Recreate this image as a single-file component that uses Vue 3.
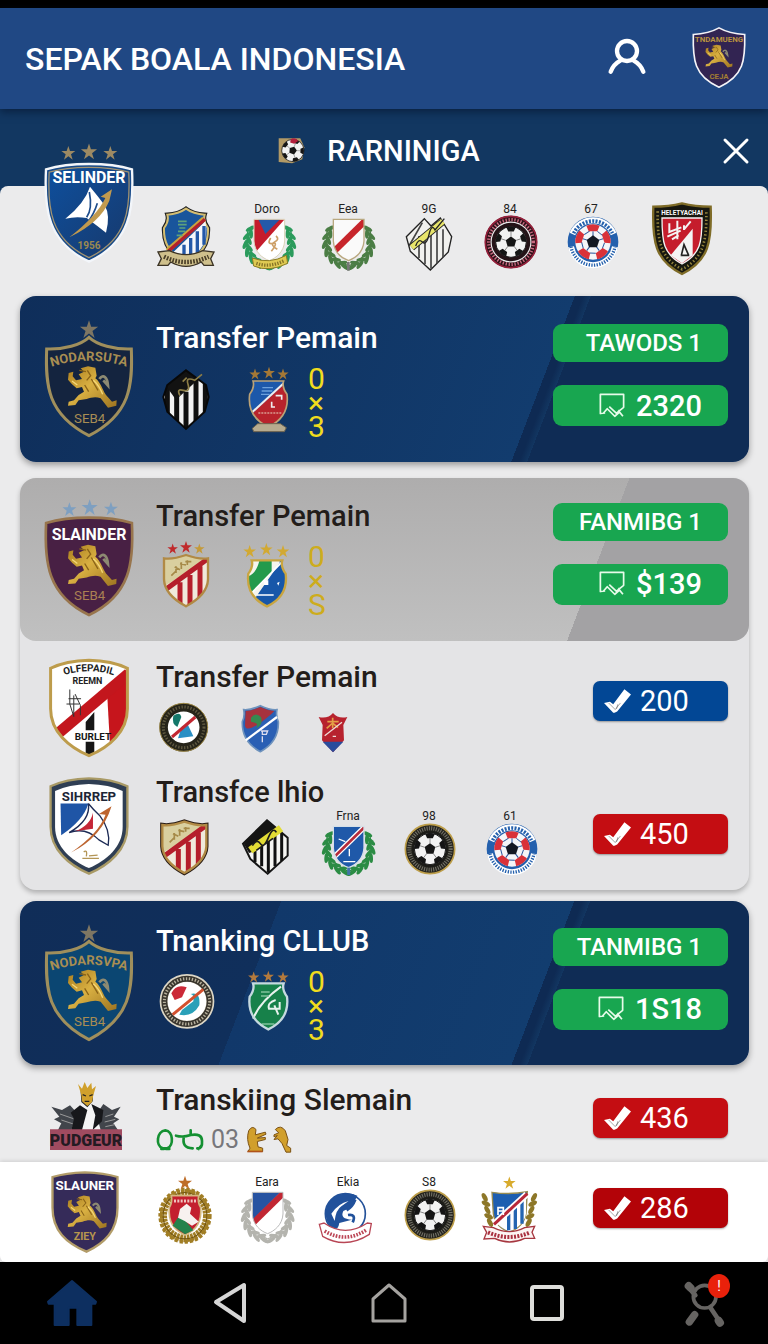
<template>
  <div class="app">
    <!-- shared shapes for all club crests -->
    <svg class="defs" width="0" height="0" aria-hidden="true">
      <defs>
        <linearGradient id="gold" x1="0" y1="0" x2="1" y2="1">
          <stop offset="0" stop-color="#a97c1d" />
          <stop offset="0.45" stop-color="#d9b042" />
          <stop offset="1" stop-color="#9d7420" />
        </linearGradient>
        <linearGradient id="sail" x1="0" y1="0" x2="1" y2="1">
          <stop offset="0" stop-color="#0e4f9d" />
          <stop offset="1" stop-color="#17396c" />
        </linearGradient>
        <path id="star" d="M0-22 5-7 21-7 8 3 13 19 0 9-13 19-8 3-21-7-5-7Z" />
        <path id="shieldA" d="M135 55C110 78 60 92 8 90C4 200 10 285 135 350C260 285 266 200 262 90C210 92 160 78 135 55Z" />
        <path id="shieldB" d="M135 56Q60 56 6 72C0 190 10 290 135 349C260 290 270 190 264 72Q210 56 135 56Z" />
        <path id="shieldC" d="M120 4Q50 6 4 28V150C4 220 60 266 120 292C180 266 236 220 236 150V28Q190 6 120 4Z" />
        <path id="badge" d="M90 36Q50 50 24 46V110C26 150 60 174 90 190C120 174 154 150 156 110V46Q130 50 90 36Z" />
        <clipPath id="badgeClip"><use href="#badge" /></clipPath>
        <path id="cup" d="M44 52H136Q130 70 146 92C152 140 132 170 90 190C48 170 28 140 34 92Q50 70 44 52Z" />
        <clipPath id="cupClip"><use href="#cup" /></clipPath>
        <path id="flat" d="M46 40H138V105C136 138 112 156 92 164C70 156 48 138 46 105Z" />
        <clipPath id="flatClip"><use href="#flat" /></clipPath>
        <clipPath id="shieldCClip"><use href="#shieldC" /></clipPath>
        <path id="gem" d="M90 16L150 60 158 96 146 140 90 192 34 140 22 96 34 60Z" />
        <clipPath id="gemClip"><use href="#gem" /></clipPath>

        <g id="lion">
          <path fill="none" stroke="#8d8a72" stroke-width="8" d="M96 40C108 24 120 34 122 60L108 44" />
          <path fill="url(#gold)" d="M40 8L62 2 84 6 88 30 84 38C100 50 104 70 116 88L134 108 148 104 147 120 122 126 100 98C84 92 72 96 58 100L34 104 24 118 2 120 4 108 20 104 34 88 50 78 44 64 28 68 14 56 2 42 4 22 18 18 16 32 26 44 44 40 34 26 50 18Z" />
          <path fill="none" stroke="#8a6318" stroke-width="4" d="M60 14L70 30 58 44M72 40L92 74M52 58L64 78M36 14L56 18" />
          <path fill="none" stroke="#f5d878" stroke-width="4" d="M78 44Q96 60 106 86M14 46L30 58" />
        </g>

        <g id="laurel">
          <path fill="none" stroke="currentColor" stroke-width="4" d="M-62-46Q-84 30 0 68Q84 30 62-46" />
          <ellipse v-for="(leaf, i) in leaves" :key="i" rx="15" ry="6" fill="currentColor"
            :transform="`translate(${leaf.x} ${leaf.y}) rotate(${leaf.r})`" />
        </g>

        <g id="ball">
          <circle r="50" fill="#f2f2f2" stroke="#111" stroke-width="3" />
          <path fill="#151515" d="M0-18 17-6 11 15-11 15-17-6Z" />
          <g v-for="n in 5" :key="n" :transform="`rotate(${n * 72})`">
            <path fill="#151515" d="M-15-47Q0-53 15-47L9-34H-9Z" />
            <path stroke="#555" stroke-width="2" d="M0-18V-34" />
          </g>
        </g>

        <!-- top strip -->
        <g id="c-royal">
          <path fill="#15407e" stroke="#222" stroke-width="13" d="M90 8Q68 24 34 26Q40 46 24 66C22 120 50 150 90 164C130 150 158 120 156 66Q140 46 146 26Q112 24 90 8Z" />
          <path fill="#19559c" stroke="#d3bd72" stroke-width="6" d="M90 8Q68 24 34 26Q40 46 24 66C22 120 50 150 90 164C130 150 158 120 156 66Q140 46 146 26Q112 24 90 8Z" />
          <path fill="#f5f7fa" d="M148 46L50 140 90 158C130 144 152 118 151 66Z" />
          <path stroke="#2358a8" stroke-width="10" d="M84 116V156M104 96V152M124 76V140M144 60V116" />
          <path stroke="#c9a33e" stroke-width="15" d="M34 134L144 38" />
          <path stroke="#b3202c" stroke-width="10" d="M37 136L147 40" />
          <path stroke="#5fa27c" stroke-width="5" d="M66 46H92M66 56H92M70 66H88M66 76H88M62 88H80" />
          <path fill="#cfc08c" stroke="#3b3325" stroke-width="4" d="M6 138L40 134Q90 158 140 134L174 138 164 158 172 178H144L136 168Q90 194 44 168L36 178H6L16 158Z" />
          <path fill="none" stroke="#4a3f28" stroke-width="13" stroke-dasharray="5 4" d="M24 152Q90 184 158 152" />
        </g>
        <g id="c-doro">
          <use href="#laurel" color="#2b9b5c" x="97" y="112" />
          <g transform="translate(5)">
            <use href="#flat" fill="#fff" />
            <g clip-path="url(#flatClip)">
              <path fill="#c51c2c" d="M46 40H138L46 144Z" />
              <path fill="#2459a9" d="M58 38H126L80 84Z" />
              <path stroke="#cda068" stroke-width="5" fill="none" d="M96 96Q84 116 102 112T98 136M112 90Q124 100 108 108T116 130" />
            </g>
            <use href="#flat" fill="none" stroke="#dad3b8" stroke-width="3" />
          </g>
          <path fill="#dfca52" stroke="#8b7c24" stroke-width="3" d="M46 156Q97 176 148 148L152 172Q97 200 50 180Z" />
          <path fill="none" stroke="#857326" stroke-width="10" stroke-dasharray="4 4" d="M58 172Q97 186 142 164" />
        </g>
        <g id="c-eea">
          <use href="#laurel" color="#4b7d45" x="92" y="112" />
          <use href="#flat" fill="#fafafa" />
          <g clip-path="url(#flatClip)"><path stroke="#c7252b" stroke-width="19" d="M44 140L146 40" /></g>
          <use href="#flat" fill="none" stroke="#b9a880" stroke-width="4" />
          <path stroke="#777" stroke-width="8" d="M91 168V194" />
        </g>
        <g id="c-gem-light">
          <path fill="#f1f1ee" stroke="#222" stroke-width="4" d="M76 38L96 60 124 36 158 92 148 138 94 192 34 136 22 92Z" />
          <path stroke="#444" stroke-width="5" d="M60 90V156M78 80V174M96 70V188M114 60V172M132 70V154M70 50L30 120" />
          <path stroke="#222" stroke-width="22" d="M38 124L130 48" />
          <path stroke="#e8e56b" stroke-width="17" d="M38 124L132 46" />
          <path fill="none" stroke="#222" stroke-width="4" d="M50 120Q58 96 70 108T90 86T108 72L136 38" />
        </g>
        <g id="c-ball-red">
          <circle cx="93" cy="108" r="70" fill="none" stroke="#2a1117" stroke-width="17" />
          <circle cx="93" cy="108" r="77" fill="none" stroke="#96203b" stroke-width="5" />
          <circle cx="93" cy="108" r="67" fill="none" stroke="#c96a80" stroke-width="10" stroke-dasharray="4 5" />
          <circle cx="93" cy="108" r="58" fill="#241317" />
          <use href="#ball" transform="translate(93 108) scale(.92)" />
        </g>
        <g id="c-ball-blue">
          <circle cx="96" cy="108" r="76" fill="#2460ad" />
          <path fill="none" stroke="#fff" stroke-width="18" d="M34 84A67 67 0 0 1 158 84" />
          <path fill="none" stroke="#2460ad" stroke-width="11" stroke-dasharray="6 4" d="M38 82A64 64 0 0 1 154 82" />
          <path fill="none" stroke="#fff" stroke-width="18" d="M30 122A67 67 0 0 0 162 122" />
          <path fill="none" stroke="#2460ad" stroke-width="10" stroke-dasharray="4 4" d="M30 122A67 67 0 0 0 162 122" />
          <circle cx="96" cy="108" r="53" fill="#f5f5f8" />
          <g v-for="n in 5" :key="n" :transform="`translate(96 108) rotate(${n * 72})`">
            <path fill="#d93139" d="M-20-49Q0-58 20-49L13-32H-13Z" />
            <path stroke="#29559b" stroke-width="3" d="M0-18V-32M13-32L28-20" />
          </g>
          <path fill="#131722" d="M96 88L115 102 108 124H84L77 102Z" />
        </g>
        <g id="c-black-red">
          <path fill="#17170f" stroke="#7f6c28" stroke-width="7" d="M90 4Q50 14 4 14C0 120 10 176 90 216C170 176 180 120 176 14Q130 14 90 4Z" />
          <path fill="none" stroke="#97873f" stroke-width="8" stroke-dasharray="4 7" d="M17 28C16 120 26 168 90 202C154 168 164 120 163 28" />
          <path fill="#c51d2c" stroke="#f3f3f3" stroke-width="4" d="M30 48H150C150 120 146 156 90 186C34 156 30 120 30 48Z" />
          <path fill="#f4f4f4" d="M122 80V160L90 184 56 160Z" />
          <path stroke="#f4f4f4" stroke-width="6" fill="none" d="M52 64V90L88 76M76 56V112M46 104L86 86M96 82L116 58M60 112L80 100M96 70V84" />
          <path stroke="#222" stroke-width="5" fill="none" d="M88 160L96 128 110 160M86 160H112" />
          <text class="crest-text" x="90" y="39" font-size="19" fill="#fff">HELETYACHAI</text>
        </g>

        <!-- transfer cards -->
        <g id="c-gem-dark">
          <use href="#gem" fill="#f3f3f3" />
          <g clip-path="url(#gemClip)">
            <path stroke="#101010" stroke-width="15" d="M34 50V160M62 40V180M90 80V190M120 30V180M148 40V150" />
            <path fill="#121212" d="M28 60L90 10 122 30 132 38 60 104Z" />
          </g>
          <use href="#gem" fill="none" stroke="#080808" stroke-width="6" />
          <path stroke="#8c7d46" stroke-width="5" fill="none" d="M72 92Q60 70 82 76T96 58T116 46L138 28M80 50L92 38" />
        </g>
        <g id="c-blue-red">
          <g fill="#a47836"><use href="#star" transform="translate(54 28) scale(.8)" /><use href="#star" transform="translate(96 24) scale(.85)" /><use href="#star" transform="translate(138 28) scale(.8)" /></g>
          <use href="#cup" fill="#1c58aa" transform="translate(4 -4)" />
          <g clip-path="url(#cupClip)" transform="translate(4 -4)">
            <path fill="#b8232c" d="M150 50V200H30V160Z" />
            <path stroke="#eee" stroke-width="6" d="M26 160L150 46" />
            <path stroke="#6ba0dc" stroke-width="4" d="M72 72H104M70 82H102M68 92H94" />
            <path stroke="#eee" stroke-width="5" fill="none" d="M112 96H130V108M100 114V130H110" />
            <path stroke="#d99a8f" stroke-width="4" stroke-dasharray="6 3" d="M60 148H132" />
          </g>
          <use href="#cup" fill="none" stroke="#baa277" stroke-width="5" transform="translate(4 -4)" />
          <path fill="#b7ab8f" stroke="#6c624e" stroke-width="3" d="M62 176L130 176 148 188 142 200 50 200 46 190Z" />
        </g>
        <g id="c-red-stripes">
          <use href="#badge" fill="#d9cf9f" />
          <g clip-path="url(#badgeClip)">
            <path fill="#f0e9dc" d="M160 50V190H40L24 130Z" />
            <path stroke="#b51e2b" stroke-width="15" d="M20 146L160 44M72 118V190M102 96V190M132 70V180" />
            <path stroke="#a68a48" stroke-width="5" fill="none" d="M46 98L60 84M60 70V90M56 72L72 80M76 58V78M72 62L90 66M94 52V66M88 56H106" />
          </g>
          <use href="#badge" fill="none" stroke="#b18a45" stroke-width="7" />
        </g>
        <g id="c-stars-red">
          <g fill="#c02a2c"><use href="#star" transform="translate(50 18) scale(.75)" /><use href="#star" transform="translate(90 13) scale(.85)" /></g>
          <use href="#star" transform="translate(130 18) scale(.75)" fill="#c49a3a" />
          <use href="#c-red-stripes" />
        </g>
        <g id="c-green-blue">
          <g fill="#d2a932"><use href="#star" transform="translate(38 26) scale(.9)" /><use href="#star" transform="translate(88 20) scale(.9)" /><use href="#star" transform="translate(138 26) scale(.9)" /></g>
          <use href="#cup" fill="#f5f5ee" />
          <g clip-path="url(#cupClip)">
            <path fill="#239a4c" d="M68 50H104V90L34 160V100Q58 92 68 50Z" />
            <path fill="#1757a9" d="M128 60V50H160V200H30Z" />
            <path stroke="#fff" stroke-width="5" d="M34 160L136 56" />
            <path fill="#fff" d="M80 112H94V126H80ZM60 154H110V158H60ZM120 120L128 116 124 128Z" />
          </g>
          <use href="#cup" fill="none" stroke="#c9a540" stroke-width="7" />
        </g>

        <g id="c-ring-black">
          <circle cx="83" cy="97" r="60" fill="#fff" stroke="#262419" stroke-width="25" />
          <circle cx="83" cy="97" r="72" fill="none" stroke="#9c8744" stroke-width="3" />
          <circle cx="83" cy="97" r="61" fill="none" stroke="#5f5940" stroke-width="9" stroke-dasharray="4 5" />
          <path fill="#14786a" d="M52 62Q72 48 76 66L64 96Q46 86 52 62Z" />
          <path fill="#2a8fc4" d="M78 94L96 90 112 124 66 130Z" />
          <path stroke="#c22731" stroke-width="9" d="M48 126L118 66" />
        </g>
        <g id="c-small-blue">
          <path fill="#2a5fb4" stroke="#6f93bd" stroke-width="5" d="M90 32Q60 46 40 44Q44 64 36 80C34 130 60 154 90 170C120 154 146 130 144 80Q136 64 140 44Q120 46 90 32Z" />
          <path fill="#a7323e" d="M90 36Q62 48 46 48L44 92Q50 120 124 56L132 48Q110 46 90 36Z" />
          <path fill="#378950" d="M62 68Q76 50 92 66Q100 90 76 100Q90 84 62 80Z" />
          <path stroke="#fff" stroke-width="7" d="M46 136L140 66" />
          <path stroke="#dde" stroke-width="4" fill="none" d="M92 108H112L108 118H96V108M96 124V142" />
        </g>
        <g id="c-tiny-red">
          <path fill="#b7222e" d="M45 54Q30 72 2 66L14 90 12 136 45 172 78 136 76 90 88 66Q60 72 45 54Z" />
          <path fill="#2a4c9c" d="M14 140H76L45 172Z" />
          <path stroke="#e3a046" stroke-width="5" fill="none" d="M28 80H62M44 68V100M26 100L44 84 60 98" />
          <path stroke="#eedcd8" stroke-width="4" d="M20 122L72 82M44 124H54" />
        </g>
        <g id="c-brown-stripes">
          <g transform="translate(-5 -10)">
            <use href="#badge" fill="none" stroke="#2a1d15" stroke-width="13" />
            <use href="#c-red-stripes" />
          </g>
        </g>
        <g id="c-gem-yellow">
          <path fill="#f5f5f2" stroke="#151515" stroke-width="6" d="M90 22L152 74V128L92 182 40 138 18 92Z" />
          <path stroke="#111" stroke-width="9" d="M54 88V148M74 80V160M94 70V178M114 60V160M134 60V144" />
          <path fill="#141414" d="M90 22L120 46 60 112 36 120 20 92Z" />
          <path stroke="#e2dc35" stroke-width="22" d="M40 112L132 46" />
          <path stroke="#1b1b1b" stroke-width="5" fill="none" d="M46 98Q60 76 70 92T94 74T118 58M58 112L108 76" />
        </g>
        <g id="c-laurel-blue">
          <use href="#laurel" color="#2b8c44" x="92" y="108" />
          <use href="#flat" fill="#1f59a9" />
          <g clip-path="url(#flatClip)">
            <path stroke="#fff" stroke-width="16" d="M40 140L148 34" />
            <path stroke="#b52b3a" stroke-width="8" d="M40 140L148 34" />
            <path stroke="#fff" stroke-width="4" d="M62 78L82 86M94 108V130M76 146H112" />
          </g>
          <use href="#flat" fill="none" stroke="#d5dfe7" stroke-width="4" />
          <path stroke="#4274a8" stroke-width="9" d="M92 164V186" />
        </g>
        <g id="c-ball-gold">
          <circle cx="93" cy="108" r="64" fill="#1c1c18" stroke="#25241e" stroke-width="20" />
          <circle cx="93" cy="108" r="74" fill="none" stroke="#bd9e4a" stroke-width="5" />
          <circle cx="93" cy="108" r="62" fill="none" stroke="#77766c" stroke-width="12" stroke-dasharray="3 4" />
          <use href="#ball" transform="translate(93 108) scale(.94)" />
        </g>

        <g id="c-ring-white">
          <circle cx="93" cy="100" r="70" fill="#fff" stroke="#ddd7c6" stroke-width="24" />
          <circle cx="93" cy="100" r="68" fill="none" stroke="#39352d" stroke-width="18" />
          <circle cx="93" cy="100" r="68" fill="none" stroke="#b9b39f" stroke-width="9" stroke-dasharray="4 5" />
          <path fill="#cb2938" d="M46 76Q60 46 92 58L78 88 56 96Z" />
          <path fill="#2aa0b8" d="M78 126L112 100Q116 80 104 78Q134 70 130 112Q110 148 70 140Z" />
          <path stroke="#d3502e" stroke-width="9" d="M50 140L142 64" />
        </g>
        <g id="c-green">
          <g fill="#b37a3d"><use href="#star" transform="translate(50 28) scale(.8)" /><use href="#star" transform="translate(94 26) scale(.8)" /><use href="#star" transform="translate(138 28) scale(.8)" /></g>
          <use href="#cup" fill="#17814a" transform="translate(4 -6)" />
          <path stroke="#e8f2ee" stroke-width="6" fill="none" d="M48 152Q70 100 132 56M116 96Q90 104 96 122H128V102M112 112L124 140" />
          <path stroke="#7fc19b" stroke-width="5" d="M72 72H98M72 84H96M74 168H112" />
          <use href="#cup" fill="none" stroke="#c5d9df" stroke-width="7" transform="translate(4 -6)" />
        </g>

        <!-- bottom row -->
        <g id="c-wreath-red">
          <g transform="translate(87 110) scale(1.08 1.14)">
            <circle r="60" fill="none" stroke="#a17e25" stroke-width="20" stroke-dasharray="8 2" />
            <circle r="61" fill="none" stroke="#6f5312" stroke-width="3" />
            <circle r="68" fill="none" stroke="#a17e25" stroke-width="12" stroke-dasharray="9 5" />
          </g>
          <ellipse cx="87" cy="108" rx="52" ry="58" fill="#fff" />
          <path fill="#c3202f" stroke="#d3b77f" stroke-width="5" d="M46 50H128Q124 70 134 86C138 130 116 156 87 168C58 156 36 130 40 86Q50 70 46 50Z" />
          <path fill="#25824b" d="M50 140L72 106 112 154 87 166Z" />
          <path fill="#f7f1ef" d="M72 90L92 74 106 86 102 104 128 128 108 140 86 126 66 116Z" />
          <path stroke="#f0c4c0" stroke-width="9" stroke-dasharray="6 4" d="M54 66H122" />
          <use href="#star" fill="#be6d29" transform="translate(87 12)" />
        </g>
        <g id="c-laurel-silver">
          <use href="#laurel" color="#b4b4ae" x="92" y="112" />
          <use href="#flat" fill="#fff" />
          <g clip-path="url(#flatClip)">
            <path fill="#2753a1" d="M46 40H130L46 124Z" />
            <path stroke="#c12733" stroke-width="18" d="M40 140L146 36" />
          </g>
          <use href="#flat" fill="none" stroke="#bbb" stroke-width="3" />
        </g>
        <g id="c-bird">
          <circle cx="82" cy="104" r="60" fill="#fff" stroke="#24529a" stroke-width="5" />
          <path fill="#21519b" d="M82 44C24 46 4 110 44 150Q60 156 64 132L102 122Q64 120 76 96Q100 90 118 50Q100 42 82 44Z" />
          <path fill="#fff" d="M40 104Q60 74 92 66L70 82Q54 92 50 126Z" />
          <path stroke="#21519b" stroke-width="8" fill="none" d="M86 94Q104 84 112 62M90 108Q116 104 104 130" />
          <path fill="#fff" stroke="#b84655" stroke-width="4" d="M4 136L18 132Q82 176 148 132L160 134 154 166Q82 212 14 172Z" />
          <path fill="none" stroke="#bc4656" stroke-width="11" stroke-dasharray="5 4" d="M20 156Q84 194 146 152" />
        </g>
        <g id="c-star-blue">
          <use href="#star" transform="translate(88 12) scale(.9)" fill="#d8ab2d" />
          <g fill="#8d7728">
            <ellipse v-for="n in 5" :key="'l' + n" rx="14" ry="7" :transform="`translate(${10 + n * 4} ${36 + n * 19}) rotate(${n % 2 ? 62 : 28})`" />
            <ellipse v-for="n in 5" :key="'r' + n" rx="14" ry="7" :transform="`translate(${166 - n * 4} ${36 + n * 19}) rotate(${n % 2 ? -62 : -28})`" />
          </g>
          <path fill="#1d5eb0" stroke="#998c51" stroke-width="4" d="M36 40Q90 48 142 38L138 104Q132 142 88 160Q44 142 40 104Z" />
          <path fill="#fff" d="M138 54V104Q132 140 88 157Q64 148 50 132Z" />
          <path stroke="#2465b1" stroke-width="10" d="M86 104V154M106 84V150M126 66V134" />
          <path stroke="#fff" stroke-width="20" d="M44 134L140 46" />
          <path stroke="#b72839" stroke-width="9" d="M42 136L142 44" />
          <path stroke="#fff" stroke-width="5" fill="none" d="M54 108V86H70V108M54 96H70" />
          <path fill="#fbf4f3" stroke="#a6363f" stroke-width="4" d="M10 142L40 146Q88 170 134 146L164 142 156 160 164 178 134 178Q88 200 44 178L12 180 20 160Z" />
          <path fill="none" stroke="#a93140" stroke-width="12" stroke-dasharray="6 4" d="M24 160Q88 188 150 160" />
        </g>

        <g id="i-check">
          <path fill="#fff" d="M62 0L82 16 40 68 32 72 28 72 0 42 18 38 28 46Z" />
          <path fill="none" stroke="#000" stroke-opacity=".35" stroke-width="3" d="M14 42L34 62 50 42M38 60L42 46" />
        </g>
      </defs>
    </svg>

    <header class="topbar">
      <h1>SEPAK BOALA INDONESIA</h1>
      <button class="icon-btn" aria-label="Profil">
        <svg width="38" height="36" viewBox="0 0 114 108" fill="none" stroke="#fff" stroke-width="13" stroke-linecap="round">
          <circle cx="57" cy="36" r="30" />
          <path d="M8 98Q16 76 38 64M106 98Q98 76 76 64" />
        </svg>
      </button>
      <svg class="club-logo" width="54" height="63" viewBox="0 0 164 188">
        <path fill="#322452" stroke="#f4f4f8" stroke-width="5" d="M82 4Q50 22 4 24C2 100 6 150 82 184C158 150 162 100 160 24Q114 22 82 4Z" />
        <text class="crest-text" x="82" y="48" font-size="24" fill="#b8923f">TNDAMUENG</text>
        <use href="#lion" transform="translate(40 54) scale(.56)" />
        <text class="crest-text" x="82" y="160" font-size="24" fill="#a17d33">CEJA</text>
      </svg>
    </header>

    <div class="subbar">
      <div class="subbar-title">
        <svg width="27" height="27" viewBox="0 0 80 80">
          <path fill="#b29a66" d="M2 4H66L78 30 72 66 42 78 2 74Z" />
          <use href="#ball" transform="translate(44 40) scale(.66) rotate(20)" />
          <path fill="#b21f3c" d="M38 6Q54 0 60 12L48 20 36 16Z" />
        </svg>
        <h2>RARNINIGA</h2>
      </div>
      <button class="icon-btn" aria-label="Tutup">
        <svg width="28" height="28" viewBox="0 0 28 28" stroke="#fff" stroke-width="3" stroke-linecap="round">
          <path d="M3 3L25 25M25 3L3 25" />
        </svg>
      </button>
    </div>

    <main>
      <section class="strip">
        <svg class="big strip-logo" width="90" height="122" viewBox="0 0 270 366">
          <g fill="#9d8a63"><use href="#star" x="73" y="34" /><use href="#star" transform="translate(135 30) scale(1.15)" /><use href="#star" x="199" y="34" /></g>
          <g transform="translate(0 10)">
            <use href="#shieldB" fill="#184a88" stroke="#f3f6fa" stroke-width="7" />
            <use href="#shieldB" fill="url(#sail)" stroke="#a29371" stroke-width="4" transform="translate(10 14) scale(.925)" />
          </g>
          <text class="crest-text" x="135" y="122" font-size="48" fill="#fff">SELINDER</text>
          <path fill="#fff" d="M138 134Q122 184 64 230Q96 222 128 228L160 252 186 272Q200 220 182 190Q160 160 138 134Z" />
          <path fill="none" stroke="#1d4c8b" stroke-width="5" d="M136 150Q146 200 128 226M160 184Q150 216 132 240" />
          <path fill="#c19a4e" d="M204 142L170 164 184 168Q160 220 76 286Q170 240 196 176Z" />
          <text class="crest-text" x="135" y="320" font-size="30" fill="#9c8a50">1956</text>
        </svg>
        <div class="crests">
          <div v-for="club in topClubs" :key="club.id" :class="['crest', { tall: club.tall }]">
            <span v-if="club.label">{{ club.label }}</span>
            <svg :height="club.tall ? 74 : club.label ? 56 : 66" width="60" :viewBox="crestBox(club)">
              <use :href="'#c-' + club.id" />
            </svg>
          </div>
        </div>
      </section>

      <article class="card blue">
        <svg class="big" width="90" height="120" viewBox="0 0 270 360">
          <use href="#star" fill="#7e7663" transform="translate(135 32) scale(1.3)" />
          <use href="#shieldA" fill="#14243f" stroke="#a08f5c" stroke-width="9" />
          <path id="arcA" fill="none" d="M14 146Q135 104 256 146" />
          <text class="crest-text" font-size="39" fill="#a98e52"><textPath href="#arcA" startOffset="50%">NODARSUTA</textPath></text>
          <use href="#lion" x="70" y="140" />
          <text class="crest-text thin" x="137" y="312" font-size="40" fill="#a88d54">SEB4</text>
        </svg>
        <div class="info">
          <h3>Transfer Pemain</h3>
          <div class="crests">
            <svg width="60" height="66" viewBox="0 0 180 198"><use href="#c-gem-dark" /></svg>
            <svg width="60" height="66" viewBox="0 0 180 198"><use href="#c-blue-red" /></svg>
            <p class="score">0<br />×<br />3</p>
          </div>
        </div>
        <div class="actions">
          <button class="pill">TAWODS 1</button>
          <button class="pill price"><svg width="26" height="26" viewBox="0 0 76 76"><path :d="notePath" /></svg>2320</button>
        </div>
      </article>

      <div class="panel">
        <article class="card grey">
          <svg class="big" width="90" height="117" viewBox="0 0 270 352">
            <g fill="#7e9fc0"><use href="#star" x="76" y="32" /><use href="#star" transform="translate(137 26) scale(1.15)" /><use href="#star" x="201" y="30" /></g>
            <use href="#shieldB" fill="#482044" stroke="#98754d" stroke-width="8" />
            <text class="crest-text" x="135" y="122" font-size="48" fill="#fff">SLAINDER</text>
            <use href="#lion" x="70" y="136" />
            <text class="crest-text thin" x="137" y="304" font-size="40" fill="#ab8053">SEB4</text>
          </svg>
          <div class="info">
            <h3>Transfer Pemain</h3>
            <div class="crests">
              <svg width="60" height="66" viewBox="0 0 180 198"><use href="#c-stars-red" /></svg>
              <svg width="60" height="66" viewBox="0 0 180 198"><use href="#c-green-blue" /></svg>
              <p class="score">0<br />×<br />S</p>
            </div>
          </div>
          <div class="actions">
            <button class="pill">FANMIBG 1</button>
            <button class="pill price"><svg width="26" height="26" viewBox="0 0 76 76"><path :d="notePath" /></svg>$139</button>
          </div>
        </article>

        <article class="row">
          <svg class="big" width="80" height="98" viewBox="0 0 240 296">
            <use href="#shieldC" fill="#fff" />
            <g clip-path="url(#shieldCClip)">
              <path fill="#c6151c" d="M174 90L240 30V220L184 270Z" />
              <path fill="#161616" d="M110 190L136 160V215H110ZM110 250H136V290H110Z" />
              <path stroke="#c3161d" stroke-width="34" d="M30 222L240 44" />
            </g>
            <use href="#shieldC" fill="none" stroke="#bd9c4c" stroke-width="9" />
            <path fill="none" stroke="#333" stroke-width="3" d="M62 92V136L74 174V110M58 120H96M78 106L94 140V170M52 136H90" />
            <path id="arcC" fill="none" d="M20 58Q120 16 220 58" />
            <text class="crest-text" font-size="30" fill="#222"><textPath href="#arcC" startOffset="50%">OLFEPADIL</textPath></text>
            <text class="crest-text" x="115" y="76" font-size="27" fill="#222">REEMN</text>
            <text class="crest-text" x="132" y="244" font-size="30" fill="#161616">BURLET</text>
          </svg>
          <div class="info">
            <h3>Transfer Pemain</h3>
            <div class="crests">
              <svg width="60" height="66" viewBox="0 0 180 198"><use href="#c-ring-black" /></svg>
              <svg width="60" height="66" viewBox="20 0 180 198"><use href="#c-small-blue" /></svg>
              <svg width="30" height="66" viewBox="0 0 90 198"><use href="#c-tiny-red" /></svg>
            </div>
          </div>
          <button class="tag navy"><svg width="27" height="24" viewBox="0 0 82 72"><use href="#i-check" /></svg>200</button>
        </article>

        <article class="row low">
          <svg class="big" width="80" height="98" viewBox="0 0 240 296">
            <use href="#shieldC" fill="#2f3e53" stroke="#a99a66" stroke-width="7" />
            <use href="#shieldC" fill="#fff" transform="translate(14 18) scale(.88)" />
            <text class="crest-text" x="120" y="72" font-size="40" fill="#1d2536">SIHRREP</text>
            <path fill="#1f55a6" d="M34 80H118Q104 130 36 176Z" />
            <path fill="none" stroke="#1d2b55" stroke-width="4" d="M118 80Q126 130 60 168Q110 150 150 190L178 206Q186 160 152 116Q134 100 118 80" />
            <path fill="#c52637" d="M132 108Q124 146 78 164L132 156Z" />
            <path fill="#bd642f" d="M188 88L150 112 170 114Q150 170 66 228Q160 180 188 88Z" />
            <path fill="none" stroke="#b39555" stroke-width="4" d="M104 226Q116 218 112 240M120 238L146 236M100 246H150" />
          </svg>
          <div class="info">
            <h3>Transfce lhio</h3>
            <div class="crests">
              <div v-for="club in midClubs" :key="club.id" class="crest">
                <span v-if="club.label">{{ club.label }}</span>
                <svg width="60" :height="club.label ? 56 : 66" :viewBox="crestBox(club)"><use :href="'#c-' + club.id" /></svg>
              </div>
            </div>
          </div>
          <button class="tag red"><svg width="27" height="24" viewBox="0 0 82 72"><use href="#i-check" /></svg>450</button>
        </article>
      </div>

      <article class="card blue split">
        <svg class="big" width="90" height="119" viewBox="0 0 270 357">
          <use href="#star" fill="#7e7663" transform="translate(135 32) scale(1.3)" />
          <use href="#shieldA" fill="#0b4672" stroke="#a08f5c" stroke-width="9" />
          <text class="crest-text" font-size="39" fill="#a98e52"><textPath href="#arcA" startOffset="50%">NODARSVPA</textPath></text>
          <use href="#lion" x="70" y="138" />
          <text class="crest-text thin" x="137" y="308" font-size="40" fill="#a88d54">SEB4</text>
        </svg>
        <div class="info">
          <h3>Tnanking CLLUB</h3>
          <div class="crests">
            <svg width="60" height="66" viewBox="0 0 180 198"><use href="#c-ring-white" /></svg>
            <svg width="60" height="66" viewBox="0 0 180 198"><use href="#c-green" /></svg>
            <p class="score">0<br />×<br />3</p>
          </div>
        </div>
        <div class="actions">
          <button class="pill">TANMIBG 1</button>
          <button class="pill price"><svg width="26" height="26" viewBox="0 0 76 76"><path :d="notePath" /></svg>1S18</button>
        </div>
      </article>

      <article class="row wide">
        <svg class="big" width="72" height="70" viewBox="0 0 216 210">
          <path fill="#41454b" d="M4 74L36 84 60 70 84 96V144H24L34 124 12 112 28 104ZM212 74L186 84 160 66 140 96V144H204L190 124 208 112 192 104Z" />
          <path stroke="#999" stroke-width="3" fill="none" d="M30 96L70 110M34 114L70 126M190 96L166 104M196 112L164 120M194 128L166 134" />
          <path fill="#f4f4f4" d="M92 66L130 66 152 144H64Z" />
          <path fill="#17181b" d="M90 70L62 92 72 110 64 144H96L112 84ZM124 66L160 84 156 118 128 144 136 100Z" />
          <path fill="#222" d="M92 28H130L128 58 112 76 94 60Z" />
          <path fill="#d0a02c" d="M84 6L96 20 104 0 112 18 124 2 126 22 138 12 130 40 126 60 112 72 96 58 94 40Z" />
          <path stroke="#222" stroke-width="4" d="M98 38L108 42M118 42L128 38M104 58H118" />
          <path fill="#a04b60" d="M0 142H216V204H0Z" />
          <text class="crest-text heavy" x="108" y="192" font-size="48" fill="#241a22">PUDGEUR</text>
        </svg>
        <div class="info">
          <h3>Transkiing Slemain</h3>
          <div class="stats">
            <svg width="48" height="22" viewBox="0 0 144 66" fill="none" stroke="#149032" stroke-width="8" stroke-linecap="round">
              <path d="M20 58C-2 50 2 6 28 4C52 6 54 50 34 58ZM16 60H24M30 60H40" />
              <path d="M60 20Q80 26 104 18Q138 12 138 36Q140 60 124 58M104 18V4M84 22Q76 58 110 58M128 60L136 50" />
            </svg>
            <span>03</span>
            <svg width="46" height="27" viewBox="0 0 138 80">
              <path fill="#d19f2c" stroke="#7c5215" stroke-width="3" d="M8 14Q18-4 30 10L28 26 58 18 60 24 34 36 58 34 58 40 34 46 36 62 50 66 50 76H6L12 66Q0 40 8 14ZM88 10Q104-6 118 14L126 40 122 58 134 66 134 78H120L108 52 96 38 84 40 94 28 84 32 84 26 98 20Z" />
              <path stroke="#b05319" stroke-width="5" d="M4 76H50" />
            </svg>
          </div>
        </div>
        <button class="tag red"><svg width="27" height="24" viewBox="0 0 82 72"><use href="#i-check" /></svg>436</button>
      </article>

      <article class="row last">
        <svg class="big" width="68" height="82" viewBox="0 0 203 246">
          <path fill="#352b59" stroke="#b29c69" stroke-width="7" d="M101 4Q44 6 4 18V110C4 180 46 216 106 242C160 216 199 180 199 110V18Q160 6 101 4Z" />
          <text class="crest-text" x="101" y="56" font-size="40" fill="#fff">SLAUNER</text>
          <use href="#lion" transform="translate(48 72) scale(.8)" />
          <text class="crest-text" x="101" y="208" font-size="32" fill="#b8964e">ZIEY</text>
        </svg>
        <div class="crests">
          <div v-for="club in bottomClubs" :key="club.id" class="crest">
            <span v-if="club.label">{{ club.label }}</span>
            <svg width="60" :height="club.label ? 56 : 66" :viewBox="crestBox(club)"><use :href="'#c-' + club.id" /></svg>
          </div>
        </div>
        <button class="tag red"><svg width="27" height="24" viewBox="0 0 82 72"><use href="#i-check" /></svg>286</button>
      </article>
    </main>

    <nav class="navbar">
      <button aria-label="Beranda">
        <svg width="52" height="48" viewBox="0 0 156 144"><path fill="#0d2f60" stroke="#0d2f60" stroke-width="6" stroke-linejoin="round" d="M78 6L150 68 148 74H136V138H94V86H68V138H26V74H8L6 68Z" /></svg>
      </button>
      <button aria-label="Kembali">
        <svg width="34" height="42" viewBox="0 0 34 42"><path fill="none" stroke="#d6d6d6" stroke-width="4" stroke-linejoin="round" d="M31 3V39L3 20Z" /></svg>
      </button>
      <button aria-label="Rumah">
        <svg width="38" height="42" viewBox="0 0 38 42"><path fill="none" stroke="#a5a3a0" stroke-width="3" stroke-linejoin="round" d="M3 39V17L19 3 35 17V39Z" /></svg>
      </button>
      <button aria-label="Aplikasi">
        <svg width="36" height="38" viewBox="0 0 36 38"><rect x="3" y="3" width="30" height="32" rx="2" fill="none" stroke="#dededb" stroke-width="4" /></svg>
      </button>
      <button class="tools" aria-label="Alat">
        <svg width="42" height="46" viewBox="0 0 126 138" stroke="#666462" fill="none" stroke-linecap="round">
          <circle cx="62" cy="50" r="34" stroke-width="11" />
          <path stroke-width="24" d="M14 18L20 24M104 122L108 128" />
          <path stroke-width="14" d="M20 30L34 46M80 84L104 120" />
          <path stroke-width="22" d="M32 104L16 126" />
        </svg>
        <span class="badge">!</span>
      </button>
    </nav>
  </div>
</template>

<script setup>
const topClubs = [
  { id: 'royal' },
  { id: 'doro', label: 'Doro' },
  { id: 'eea', label: 'Eea' },
  { id: 'gem-light', label: '9G' },
  { id: 'ball-red', label: '84' },
  { id: 'ball-blue', label: '67' },
  { id: 'black-red', tall: true }
]

const midClubs = [
  { id: 'brown-stripes' },
  { id: 'gem-yellow' },
  { id: 'laurel-blue', label: 'Frna' },
  { id: 'ball-gold', label: '98' },
  { id: 'ball-blue', label: '61' }
]

const bottomClubs = [
  { id: 'wreath-red' },
  { id: 'laurel-silver', label: 'Eara' },
  { id: 'bird', label: 'Ekia' },
  { id: 'ball-gold', label: 'S8' },
  { id: 'star-blue' }
]

// labelled crests leave out the empty top of their box
const crestBox = (club) => {
  if (club.tall) return '0 0 180 222'
  return club.label ? '0 30 180 168' : '0 0 180 198'
}

const notePath = 'M18 58L4 60V4H72V42L52 58M12 60L24 46 46 68 60 56 70 68M30 40L52 60 60 50'

// leaves along both arms of the laurel, outer and inner by turns
const leaves = []
for (const side of [-1, 1]) {
  for (let k = 0; k < 13; k++) {
    const deg = 98 + k * 10
    const t = (deg * Math.PI) / 180
    const radius = k % 2 ? 62 : 72
    leaves.push({
      x: Math.round(side * -radius * Math.cos(t)),
      y: Math.round(radius * Math.sin(t)),
      r: side * -(deg + (k % 2 ? 60 : 115))
    })
  }
}
</script>

<style>
body {
  background: #000;
}
</style>

<style scoped>
.app {
  min-height: 100vh;
  display: flex;
  flex-direction: column;
  border-top: 8px solid #000;
  box-sizing: border-box;
  font-family: Roboto, "Liberation Sans", sans-serif;
  background: #123761;
}
.defs {
  position: absolute;
}
svg {
  display: block;
  flex: none;
  overflow: visible;
}
h1, h2, h3 {
  margin: 0;
  font-weight: 500;
}
button {
  border: 0;
  padding: 0;
  font-family: inherit;
  cursor: pointer;
}
.icon-btn {
  background: none;
}
.crest-text {
  text-anchor: middle;
  font-weight: 700;
}
.crest-text.thin {
  font-weight: 400;
}
.crest-text.heavy {
  font-weight: 900;
}

.topbar {
  display: flex;
  align-items: center;
  height: 101px;
  padding: 0 22px 0 25px;
  box-sizing: border-box;
  color: #fff;
  background: #204884;
  box-shadow: 0 3px 8px rgba(4, 18, 44, 0.6);
}
.topbar h1 {
  flex: 1;
  font-size: 32px;
  line-height: 40px;
}
.topbar .icon-btn {
  margin-bottom: 3px;
}
.club-logo {
  margin: 0 0 2px 46px;
}

.subbar {
  display: grid;
  grid-template-columns: 1fr auto 1fr;
  align-items: center;
  height: 77px;
  padding: 6px 18px 0 8px;
  box-sizing: border-box;
  color: #fff;
}
.subbar-title {
  grid-column: 2;
  display: flex;
  align-items: center;
  gap: 22px;
}
.subbar h2 {
  font-size: 29px;
  line-height: 36px;
}
.subbar .icon-btn {
  justify-self: end;
}

main {
  flex: 1;
  background: #ebebec;
  border-radius: 8px 8px 0 0;
}
.big {
  margin-right: 22px;
}
.strip {
  display: flex;
  height: 110px;
  padding: 0 56px 0 44px;
}
.strip-logo {
  margin-top: -44px;
}
.strip .crests {
  flex: 1;
  height: 106px;
}
.crests {
  display: flex;
  align-items: center;
  gap: 21px;
}
.crest {
  display: flex;
  flex-direction: column;
  align-items: center;
  width: 60px;
}
.crest.tall {
  margin-left: auto;
}
.crest span {
  margin-top: -3px;
  font-size: 12px;
  line-height: 13px;
  color: #222;
}

.card {
  display: flex;
  align-items: center;
  margin: 0 19px 0 20px;
  padding: 15px 21px 23px 24px;
  border-radius: 16px;
}
.card .big {
  margin-top: 8px;
}
.card.blue {
  color: #fff;
  background: linear-gradient(111deg, #0f2e5a 0%, #123c6e 70%, #0e2a53 70%, #0e2a53 71%, #123661 72%, #0f2c55 72%);
  box-shadow: 0 3px 6px rgba(0, 0, 0, 0.35);
}
.card.split {
  margin-top: 11px;
  padding: 14px 21px 23px 24px;
  background: linear-gradient(111deg, #102d58 0%, #102f5b 33%, #11386a 33%, #123d6f 70%, #0e2a53 70%, #0e2a53 71%, #123661 72%, #0f2c55 72%);
}
.card.grey {
  margin: 0;
  padding: 13px 21px 25px 24px;
  background: linear-gradient(111deg, transparent 77%, #a3a2a4 77%), linear-gradient(#aeadad, #c0c0c0);
}
.info h3 {
  font-size: 30px;
  line-height: 36px;
}
.card .crests {
  margin-top: 9px;
}
.card.grey h3,
.row h3 {
  color: #231d1a;
}
.card.grey h3,
.card.split h3,
.row.low h3 {
  font-size: 29px;
}
.score {
  width: 16px;
  margin: 2px 0 -8px -10px;
  text-align: center;
  font-size: 30px;
  line-height: 24px;
  color: #f0dc1e;
}
.grey .score {
  color: #cdac1d;
}

.actions {
  display: flex;
  flex-direction: column;
  gap: 23px;
  width: 175px;
  margin-left: auto;
}
.pill {
  display: flex;
  align-items: center;
  justify-content: flex-end;
  height: 38px;
  padding-right: 26px;
  border-radius: 9px;
  color: #fff;
  font-size: 24px;
  font-weight: 500;
  background: #18a650;
}
.pill.price {
  gap: 11px;
  height: 41px;
  font-size: 29px;
}
.pill path {
  fill: none;
  stroke: #e6fbe9;
  stroke-width: 5;
  stroke-linejoin: round;
}

.panel {
  margin: 16px 19px 0 20px;
  border-radius: 16px;
  background: #e4e4e6;
  box-shadow: 0 3px 5px rgba(0, 0, 0, 0.25);
}
.row {
  display: flex;
  align-items: flex-start;
  padding: 18px 21px 5px 29px;
}
.row .big {
  margin-right: 27px;
}
.row.low {
  padding: 8px 21px 11px 29px;
}
.row.low .big {
  margin-top: 3px;
}
.row.low .crests {
  margin-top: 3px;
}
.tag {
  display: flex;
  align-items: center;
  gap: 9px;
  width: 135px;
  height: 40px;
  margin: 22px 0 0 auto;
  padding-left: 11px;
  border-radius: 7px;
  color: #fff;
  font-size: 29px;
  box-shadow: 0 1px 2px rgba(0, 0, 0, 0.35);
}
.row.low .tag {
  margin-top: 40px;
}
.tag.navy {
  background: #024795;
}
.tag.red {
  background: #c40d12;
}
.row.wide {
  padding: 17px 40px 9px 50px;
}
.row.wide .big {
  margin-right: 34px;
}
.row.wide .tag {
  margin-top: 16px;
}
.stats {
  display: flex;
  align-items: center;
  gap: 7px;
  margin-top: 8px;
  height: 27px;
}
.stats span {
  font-size: 25px;
  color: #77777b;
}
.row.last {
  align-items: center;
  height: 100px;
  padding: 0 40px 0 51px;
  box-sizing: border-box;
  background: #fff;
  border-radius: 0 0 6px 6px;
  box-shadow: 0 -1px 4px rgba(0, 0, 0, 0.12);
}
.row.last .big {
  margin-right: 37px;
}
.row.last .tag {
  margin-top: 0;
  margin-bottom: 8px;
  background: #b30308;
}

.navbar {
  display: flex;
  align-items: center;
  justify-content: space-between;
  height: 82px;
  padding: 0 33px 0 42px;
  background: #000;
}
.navbar button {
  display: flex;
  justify-content: center;
  width: 60px;
  background: none;
}
.tools {
  position: relative;
}
.badge {
  position: absolute;
  top: -6px;
  right: 5px;
  width: 22px;
  height: 24px;
  border-radius: 50%;
  background: #e9210b;
  color: #fff;
  font-size: 14px;
  line-height: 24px;
}
</style>
